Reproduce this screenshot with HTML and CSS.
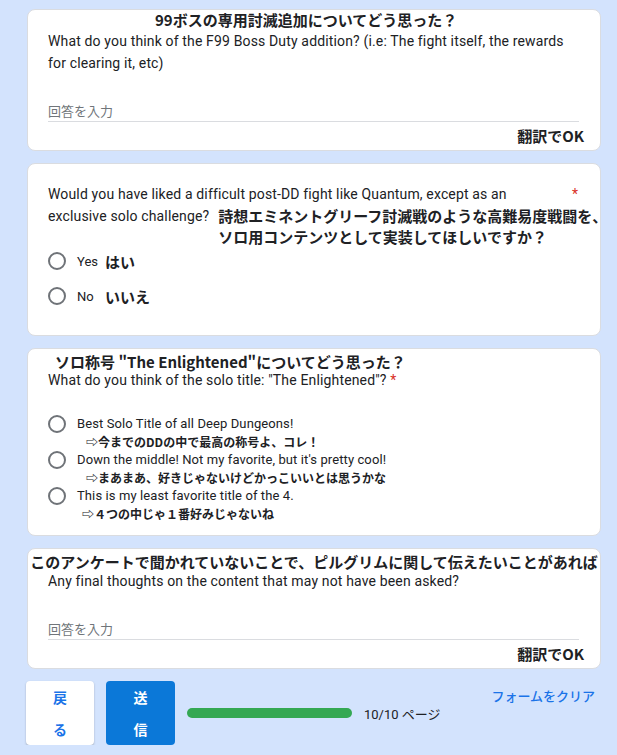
FILE: index.html
```html
<!DOCTYPE html>
<html lang="ja">
<head>
<meta charset="utf-8">
<title>Form</title>
<link rel="stylesheet" href="styles.css">
</head>
<body>
<div class="page">
  <section class="card c1">
    <div class="ttl t1">99ボスの専用討滅追加についてどう思った？</div>
    <div class="q q1">What do you think of the F99 Boss Duty addition? (i.e: The fight itself, the rewards for clearing it, etc)</div>
    <div class="answer a1">回答を入力</div>
    <div class="ok">翻訳でOK</div>
  </section>

  <section class="card c2">
    <div class="q2row1"><span class="q">Would you have liked a difficult post-DD fight like Quantum, except as an</span><span class="req">*</span></div>
    <div class="q2row2"><span class="q nw">exclusive solo challenge?</span><span class="ja">詩想エミネントグリーフ討滅戦のような高難易度戦闘を、<br>ソロ用コンテンツとして実装してほしいですか？</span></div>
    <div class="radios">
      <div class="radio"><span class="circle"></span><span class="en-lbl">Yes</span><span class="ja-lbl">はい</span></div>
      <div class="radio"><span class="circle"></span><span class="en-lbl">No</span><span class="ja-lbl">いいえ</span></div>
    </div>
  </section>

  <section class="card c3">
    <div class="ttl t3">ソロ称号 "The Enlightened"についてどう思った？</div>
    <div class="q q3">What do you think of the solo title: "The Enlightened"? <span class="req">*</span></div>
    <div class="options">
      <div class="opt"><span class="circle"></span><span class="opt-en">Best Solo Title of all Deep Dungeons!</span><span class="opt-ja">⇨今までのDDの中で最高の称号よ、コレ！</span></div>
      <div class="opt"><span class="circle"></span><span class="opt-en">Down the middle! Not my favorite, but it's pretty cool!</span><span class="opt-ja">⇨まあまあ、好きじゃないけどかっこいいとは思うかな</span></div>
      <div class="opt"><span class="circle"></span><span class="opt-en">This is my least favorite title of the 4.</span><span class="opt-ja opt-ja3">⇨４つの中じゃ１番好みじゃないね</span></div>
    </div>
  </section>

  <section class="card c4">
    <div class="ttl t4">このアンケートで聞かれていないことで、ピルグリムに関して伝えたいことがあれば</div>
    <div class="q q4">Any final thoughts on the content that may not have been asked?</div>
    <div class="answer a4">回答を入力</div>
    <div class="ok">翻訳でOK</div>
  </section>

  <div class="nav">
    <button class="btn back">戻る</button>
    <button class="btn submit">送信</button>
    <div class="progress"><div class="bar"></div></div>
    <span class="pages">10/10 ページ</span>
    <a class="clear">フォームをクリア</a>
  </div>
</div>
</body>
</html>
```

FILE: styles.css
```css
* { box-sizing: border-box; }
body {
  margin: 0;
  background: #d3e3fd;
  font-family: Roboto, "Noto Sans CJK JP", sans-serif;
  color: #202124;
}
.page {
  margin-left: 27px;
  width: 574px;
  padding-top: 9px;
  display: flex;
  flex-direction: column;
  gap: 12px;
}
.card {
  background: #fff;
  border: 1px solid #dadce0;
  border-radius: 8px;
  padding: 0 21px 0 20px;
}
.ttl {
  font-family: "Noto Sans CJK JP", sans-serif;
  font-weight: 700;
  font-size: 15px;
  color: #202124;
  white-space: nowrap;
}
.q {
  font-size: 14px;
  letter-spacing: 0.15px;
  color: #202124;
}
.nw { white-space: nowrap; flex-shrink: 0; }
.req { color: #d93025; font-size: 14px; }

/* card 1 */
.c1 { padding-bottom: 4px; }
.t1 { line-height: 20px; padding-left: 107px; }
.q1 { line-height: 22px; }
.answer {
  font-family: "Noto Sans CJK JP", sans-serif;
  font-size: 13px;
  line-height: 20px;
  color: #70757a;
  border-bottom: 1px solid #dadce0;
}
.a1 { margin-top: 27px; }
.ok {
  margin-top: 4px;
  margin-right: -5px;
  text-align: right;
  font-family: "Noto Sans CJK JP", sans-serif;
  font-weight: 700;
  font-size: 15px;
  line-height: 20px;
}

/* card 2 */
.c2 { padding-top: 19px; padding-bottom: 25px; }
.q2row1 {
  display: flex;
  justify-content: space-between;
  line-height: 22px;
}
.q2row1 .req { margin-right: 1px; }
.q2row2 {
  display: flex;
  align-items: flex-start;
  line-height: 22px;
}
.ja {
  flex-shrink: 0;
  margin-left: 9px;
  white-space: nowrap;
  font-family: "Noto Sans CJK JP", sans-serif;
  font-weight: 700;
  font-size: 15px;
  line-height: 21px;
}
.radios {
  display: flex;
  flex-direction: column;
  gap: 7px;
}
.radio {
  display: flex;
  align-items: center;
  height: 28px;
}
.circle {
  width: 18px;
  height: 18px;
  border: 2px solid #6f7378;
  border-radius: 50%;
  flex-shrink: 0;
  margin-right: 11px;
}
.en-lbl { font-size: 13px; width: 28px; }
.ja-lbl {
  font-family: "Noto Sans CJK JP", sans-serif;
  font-weight: 700;
  font-size: 15px;
}

/* card 3 */
.c3 { padding-top: 4px; padding-bottom: 12px; }
.t3 { line-height: 18px; padding-left: 7px; }
.q3 { line-height: 18px; }
.options { margin-top: 26px; }
.opt {
  display: grid;
  grid-template-columns: 29px 1fr;
  line-height: 18px;
}
.opt .circle { grid-row: 1; grid-column: 1; margin: 0; }
.opt-en { grid-row: 1; grid-column: 2; font-size: 13px; letter-spacing: 0.1px; }
.opt-ja {
  grid-row: 2;
  grid-column: 2;
  padding-left: 9px;
  font-family: "Noto Sans CJK JP", sans-serif;
  font-weight: 700;
  font-size: 12px;
}
.opt-ja3 { padding-left: 5px; }

/* card 4 */
.c4 { padding-top: 3px; padding-bottom: 4px; }
.t4 { line-height: 20px; margin: 0 -20px 0 -19px; text-align: center; }
.q4 { line-height: 18px; }
.a4 { margin-top: 29px; }

/* nav */
.nav {
  display: flex;
  align-items: center;
  margin-left: -1px;
  width: 575px;
}
.btn {
  width: 68px;
  height: 64px;
  padding: 0 24px;
  border: none;
  border-radius: 4px;
  font-family: "Noto Sans CJK JP", sans-serif;
  font-weight: 700;
  font-size: 14px;
  line-height: 32px;
  cursor: pointer;
}
.back {
  background: #fff;
  color: #1a73e8;
  box-shadow: 0 1px 2px rgba(60, 64, 67, 0.35);
}
.submit {
  width: 69px;
  margin-left: 12px;
  background: #0b78d8;
  color: #fff;
}
.progress {
  margin-left: 12px;
  width: 165px;
  height: 10px;
}
.bar {
  width: 100%;
  height: 100%;
  background: #34a853;
  border-radius: 5px;
}
.pages {
  margin-left: 12px;
  font-size: 13px;
  font-family: Roboto, "Noto Sans CJK JP", sans-serif;
  color: #202124;
}
.clear {
  margin-left: auto;
  margin-right: 6px;
  align-self: flex-start;
  margin-top: 5px;
  font-family: "Noto Sans CJK JP", sans-serif;
  font-weight: 500;
  font-size: 13px;
  line-height: 20px;
  color: #1a73e8;
}
```
